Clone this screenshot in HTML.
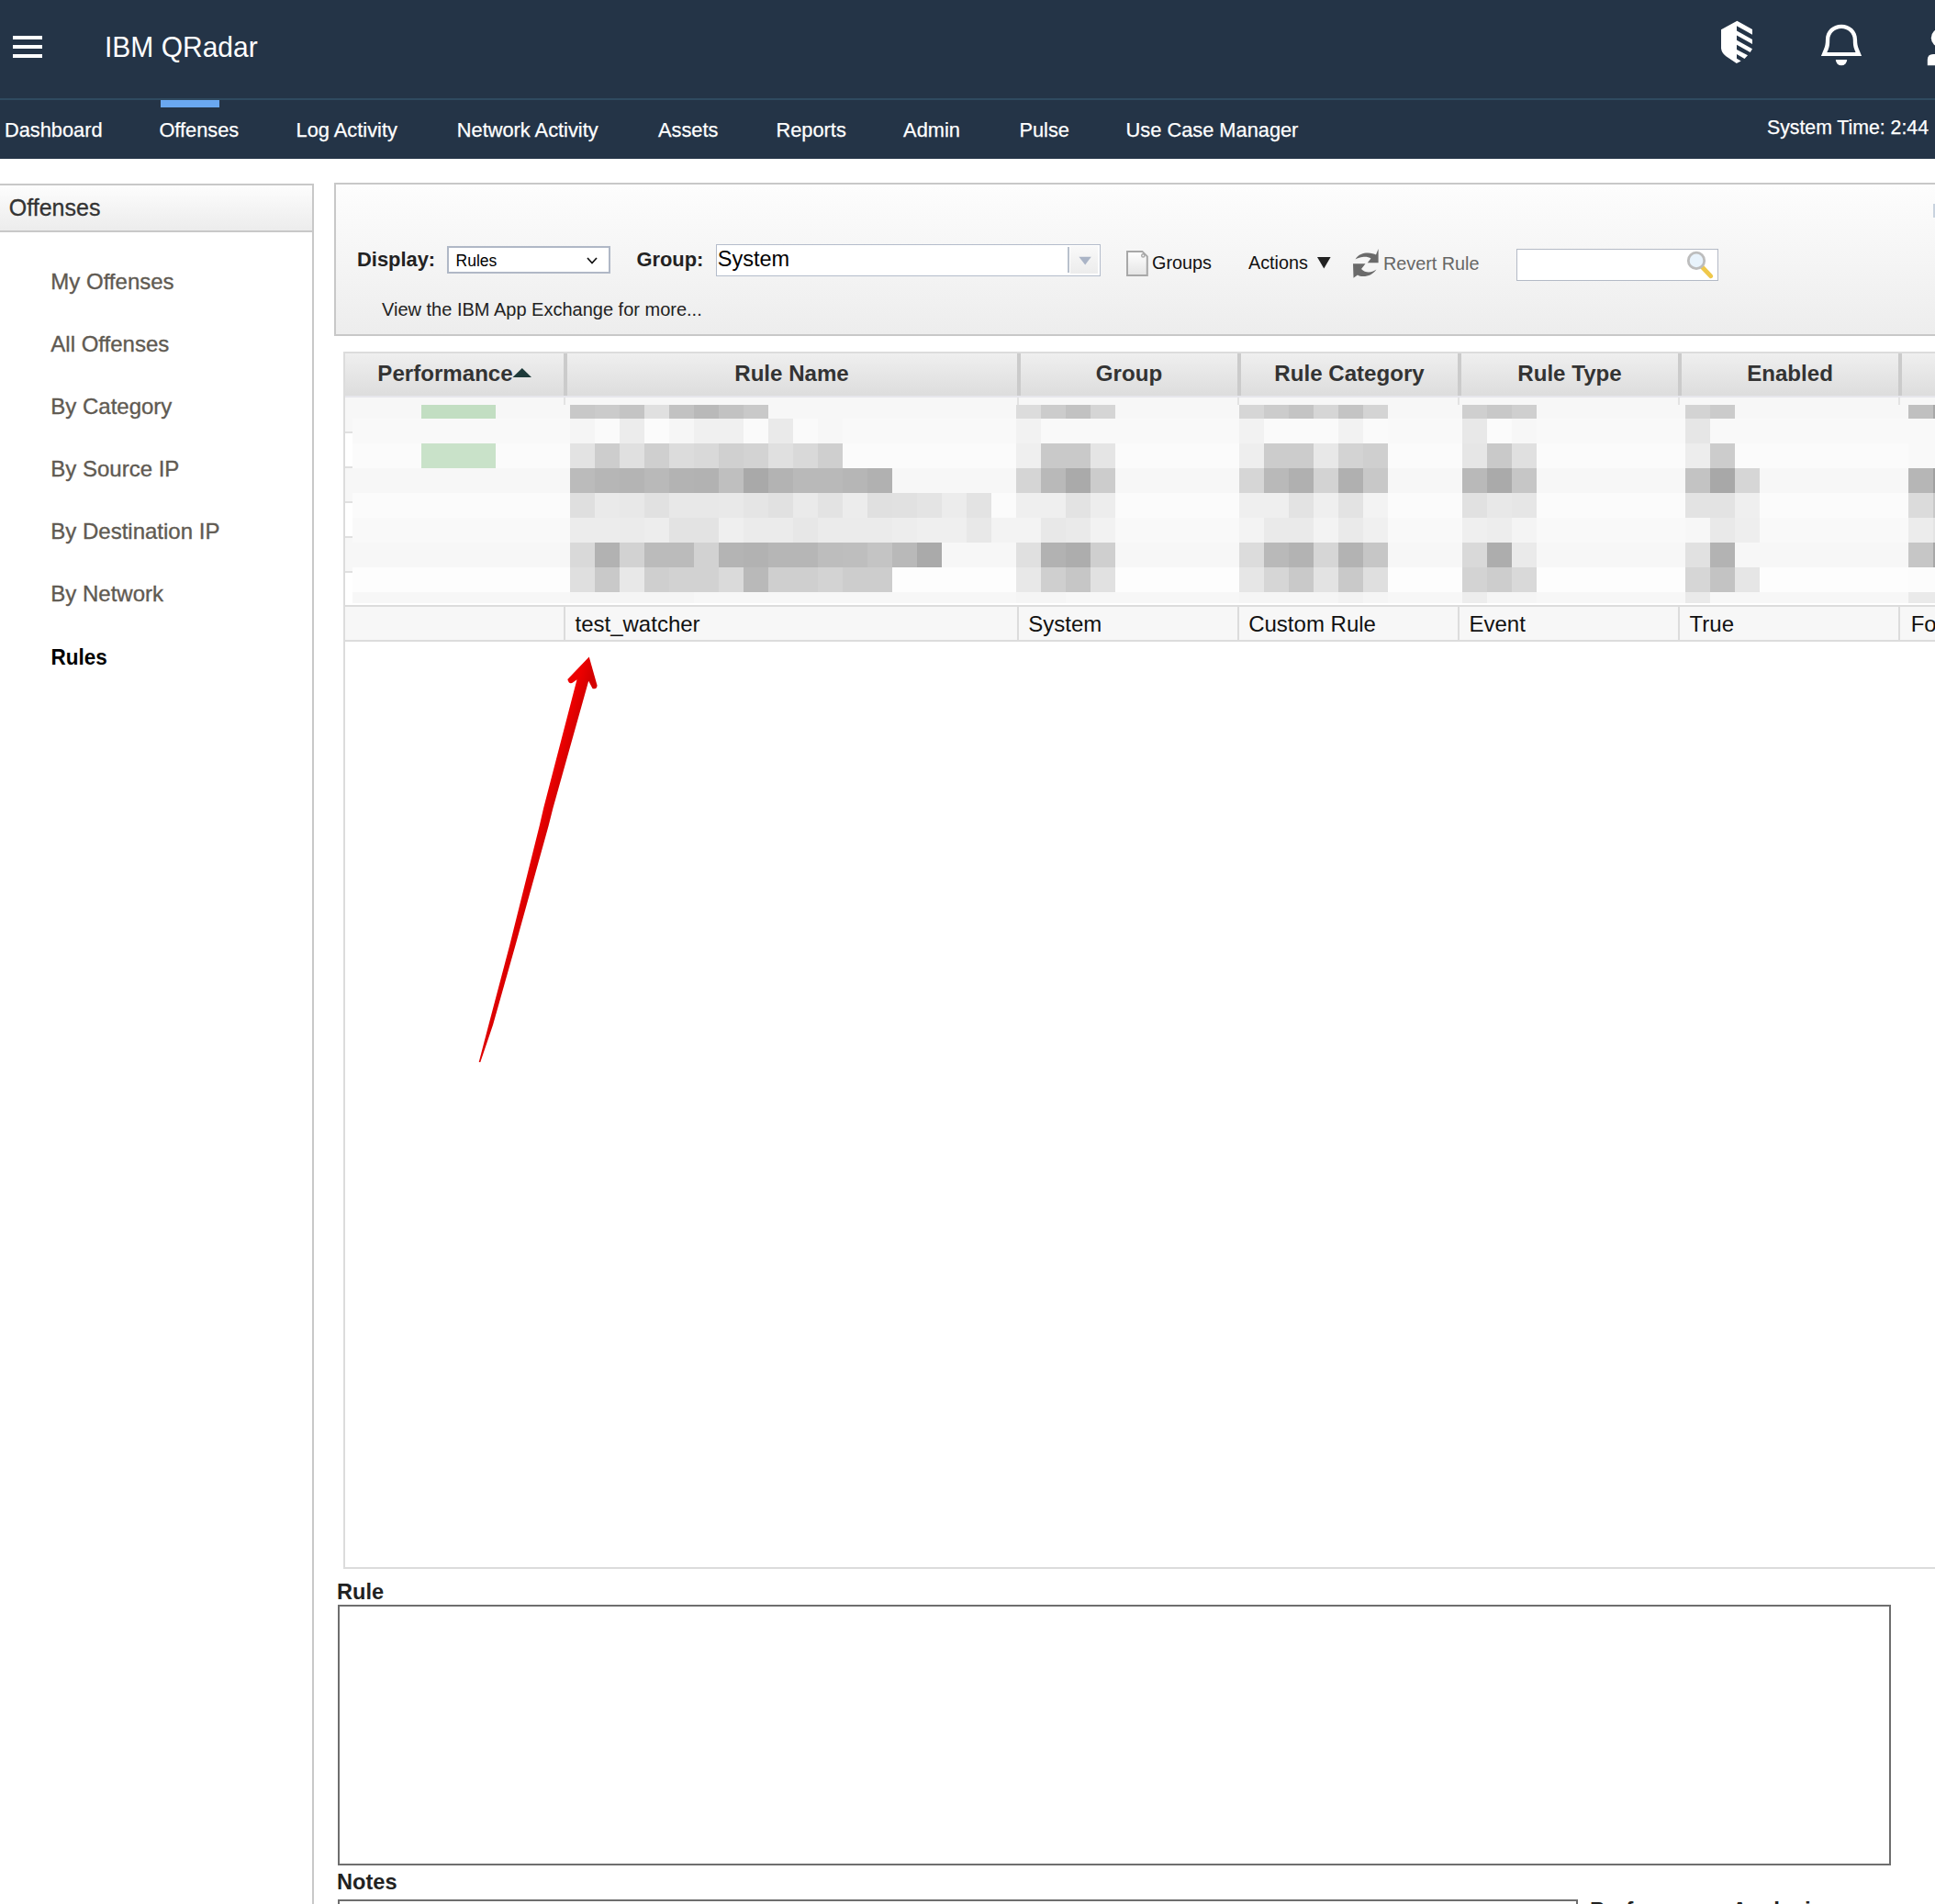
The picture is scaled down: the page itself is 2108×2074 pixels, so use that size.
<!DOCTYPE html><html><head><meta charset="utf-8"><style>
html,body{margin:0;padding:0;width:2108px;height:2074px;overflow:hidden;background:#fff;position:relative;}
.t{position:absolute;white-space:nowrap;line-height:1;font-family:"Liberation Sans", sans-serif;}
.r{position:absolute;}
svg{position:absolute;overflow:visible;}
</style></head><body>
<div class="r" style="left:0px;top:0px;width:2108px;height:107px;background:#243447;"></div>
<div class="r" style="left:0px;top:107px;width:2108px;height:2px;background:#2f4a60;"></div>
<div class="r" style="left:0px;top:109px;width:2108px;height:64px;background:#243447;"></div>
<div class="r" style="left:14px;top:39px;width:32px;height:4px;background:#fff;"></div>
<div class="r" style="left:14px;top:49px;width:32px;height:4px;background:#fff;"></div>
<div class="r" style="left:14px;top:59px;width:32px;height:4px;background:#fff;"></div>
<div class="t" style="left:114.0px;top:37.4px;font-size:30px;color:#fff;font-weight:400;transform:scaleY(1.07);transform-origin:0 84.65%;">IBM QRadar</div>
<div class="r" style="left:175px;top:109px;width:64px;height:8px;background:#6aa8f0;"></div>
<div class="t" style="left:4.9px;top:130.8px;font-size:21.8px;color:#fff;font-weight:400;-webkit-text-stroke:0.25px #fff;">Dashboard</div>
<div class="t" style="left:173.4px;top:130.8px;font-size:21.8px;color:#fff;font-weight:400;-webkit-text-stroke:0.25px #fff;">Offenses</div>
<div class="t" style="left:322.6px;top:130.8px;font-size:21.8px;color:#fff;font-weight:400;-webkit-text-stroke:0.25px #fff;">Log Activity</div>
<div class="t" style="left:497.8px;top:130.8px;font-size:21.8px;color:#fff;font-weight:400;-webkit-text-stroke:0.25px #fff;">Network Activity</div>
<div class="t" style="left:717.0px;top:130.8px;font-size:21.8px;color:#fff;font-weight:400;-webkit-text-stroke:0.25px #fff;">Assets</div>
<div class="t" style="left:845.5px;top:130.8px;font-size:21.8px;color:#fff;font-weight:400;-webkit-text-stroke:0.25px #fff;">Reports</div>
<div class="t" style="left:984.1px;top:130.8px;font-size:21.8px;color:#fff;font-weight:400;-webkit-text-stroke:0.25px #fff;">Admin</div>
<div class="t" style="left:1110.4px;top:130.8px;font-size:21.8px;color:#fff;font-weight:400;-webkit-text-stroke:0.25px #fff;">Pulse</div>
<div class="t" style="left:1226.6px;top:130.8px;font-size:21.8px;color:#fff;font-weight:400;-webkit-text-stroke:0.25px #fff;">Use Case Manager</div>
<div class="t" style="left:1925.0px;top:128.5px;font-size:21.25px;color:#fff;font-weight:400;-webkit-text-stroke:0.25px #fff;">System Time: 2:44</div>
<svg style="left:1860px;top:15px" width="70" height="65" viewBox="0 0 70 65"><path fill="#fff" d="M32.4,7.8 L49,17 L49,22.8 L32,13.2 L32,18.6 L49,28 L49,33 L32,23.5 L32,28.8 L49,38.3 L46.7,42 L32,33.8 L32,38.9 L44,45.2 L40.5,49 L32,44 L32,48.7 L36.7,51.4 L31.8,53.9 L20.3,46.3 Q15.5,43 15,37.6 L15,17.2 Z"/></svg>
<svg style="left:1970px;top:15px" width="80" height="70" viewBox="0 0 80 70"><path fill="#fff" fill-rule="evenodd" d="M13.9,46 L58.1,46 L55,38.5 C53.5,35 53.1,32 53.1,28.5 C53.1,18.5 45.5,11.8 36,11.8 C26.5,11.8 18.9,18.5 18.9,28.5 C18.9,32 18.5,35 17,38.5 Z M20.3,42.1 L51.5,42.1 L50.5,39.5 C49,36 48.8,32.5 48.8,28.5 C48.8,21 43,16 36,16 C29,16 23.2,21 23.2,28.5 C23.2,32.5 23,36 21.5,39.5 Z"/><path fill="#fff" d="M29.8,49.9 L42.2,49.9 A6.2,6.4 0 0 1 29.8,49.9 Z"/></svg>
<svg style="left:2090px;top:15px" width="40" height="70" viewBox="0 0 40 70"><circle cx="24" cy="26.2" r="10.2" fill="#fff"/><path fill="#fff" d="M9.8,56.3 L9.8,50 Q9.8,43.9 16,43.9 L40,43.9 L40,56.3 Z"/></svg>
<div class="r" style="left:0px;top:200px;width:342px;height:1874px;background:#fff;box-sizing:border-box;border-top:2px solid #c8c8c8;border-right:2px solid #c8c8c8;"></div>
<div class="r" style="left:0px;top:202px;width:340px;height:49px;background:linear-gradient(#fdfdfd,#ececec);"></div>
<div class="r" style="left:0px;top:251px;width:340px;height:2px;background:#c8c8c8;"></div>
<div class="t" style="left:9.8px;top:213.8px;font-size:25px;color:#333;font-weight:400;-webkit-text-stroke:0.3px #333;">Offenses</div>
<div class="t" style="left:55.3px;top:295.2px;font-size:24px;color:#5f5a52;font-weight:400;-webkit-text-stroke:0.35px #5f5a52;">My Offenses</div>
<div class="t" style="left:55.3px;top:363.2px;font-size:24px;color:#5f5a52;font-weight:400;-webkit-text-stroke:0.35px #5f5a52;">All Offenses</div>
<div class="t" style="left:55.3px;top:431.2px;font-size:24px;color:#5f5a52;font-weight:400;-webkit-text-stroke:0.35px #5f5a52;">By Category</div>
<div class="t" style="left:55.3px;top:499.2px;font-size:24px;color:#5f5a52;font-weight:400;-webkit-text-stroke:0.35px #5f5a52;">By Source IP</div>
<div class="t" style="left:55.3px;top:567.2px;font-size:24px;color:#5f5a52;font-weight:400;-webkit-text-stroke:0.35px #5f5a52;">By Destination IP</div>
<div class="t" style="left:55.3px;top:635.2px;font-size:24px;color:#5f5a52;font-weight:400;-webkit-text-stroke:0.35px #5f5a52;">By Network</div>
<div class="t" style="left:55.5px;top:705.6px;font-size:22.5px;color:#000;font-weight:700;transform:scaleY(1.04);transform-origin:0 84.65%;">Rules</div>
<div class="r" style="left:364px;top:199px;width:1800px;height:167px;background:linear-gradient(#fdfdfd,#ededed);box-sizing:border-box;border:2px solid #c8c8c8;"></div>
<div class="t" style="left:389.0px;top:271.5px;font-size:21.9px;color:#222;font-weight:700;">Display:</div>
<div class="r" style="left:487px;top:268px;width:178px;height:30px;background:#fff;box-sizing:border-box;border:2px solid #b0b8c6;"></div>
<div class="t" style="left:496.6px;top:275.7px;font-size:17.5px;color:#000;font-weight:400;">Rules</div>
<svg style="left:638px;top:278px" width="14" height="12" viewBox="0 0 14 12"><path d="M2,3 L7,8.5 L12,3" fill="none" stroke="#111" stroke-width="1.7"/></svg>
<div class="t" style="left:693.4px;top:271.5px;font-size:21.9px;color:#222;font-weight:700;">Group:</div>
<div class="r" style="left:779.5px;top:265.5px;width:419.5px;height:35px;background:#fff;box-sizing:border-box;border:1.6px solid #b4bccb;"></div>
<div class="r" style="left:1163px;top:269px;width:2px;height:28px;background:#b8c0cc;"></div>
<div class="r" style="left:1165px;top:267px;width:32px;height:32px;background:linear-gradient(#f9f9f9,#ececec);box-sizing:border-box;border:1px solid #fff;"></div>
<svg style="left:1170px;top:274px" width="24" height="20" viewBox="0 0 24 20"><path d="M5.4,5.7 L18.8,5.7 L12.2,14.4 Z" fill="#aab4c6"/></svg>
<div class="t" style="left:781.8px;top:271.1px;font-size:23.5px;color:#000;font-weight:400;">System</div>
<svg style="left:1220px;top:262px" width="40" height="46" viewBox="0 0 40 46"><defs><linearGradient id="dg" x1="0" y1="0" x2="0" y2="1"><stop offset="0" stop-color="#fff"/><stop offset="1" stop-color="#e4e4e4"/></linearGradient></defs><path d="M8,11.9 L24.4,11.9 L29.8,17.4 L29.8,37.9 L8,37.9 Z" fill="url(#dg)" stroke="#a8a8a8" stroke-width="2"/><circle cx="25.3" cy="16.4" r="1.6" fill="none" stroke="#a8a8a8" stroke-width="1.4"/></svg>
<div class="t" style="left:1255.0px;top:277.1px;font-size:19.8px;color:#111;font-weight:400;">Groups</div>
<div class="t" style="left:1360.0px;top:277.1px;font-size:19.8px;color:#111;font-weight:400;">Actions</div>
<svg style="left:1430px;top:278px" width="24" height="16" viewBox="0 0 24 16"><path d="M5,2 L19.6,2 L12.3,14.5 Z" fill="#222"/></svg>
<svg style="left:1465px;top:265px" width="45" height="45" viewBox="0 0 45 45"><g fill="#6a6a6a"><path d="M11.5,17.5 C15,12 20,10.5 25,10.5 C29,10.5 32,11.5 34,12.5 L36.6,6 L36.6,21.3 L24.8,21.3 L28.5,16.5 C26.5,15 23,14.5 20.5,14.8 C16.5,15.2 13,16.5 11.5,17.5 Z"/><path d="M9,22.2 L22.5,22.2 L18,28 C20,30.5 23.5,31.5 26,31.5 C29.5,31.5 32.5,30 34.5,28.5 C31,33.5 26,36 20,36 C17.5,36 15.5,35.5 14,34.5 L9.5,37.8 Z"/></g></svg>
<div class="t" style="left:1507.0px;top:277.9px;font-size:19.8px;color:#666;font-weight:400;">Revert Rule</div>
<div class="r" style="left:1652px;top:270.5px;width:220px;height:35px;background:#fff;box-sizing:border-box;border:1.6px solid #b4bac6;"></div>
<svg style="left:1830px;top:266px" width="46" height="46" viewBox="0 0 46 46"><line x1="24.5" y1="25" x2="33.8" y2="34.8" stroke="#efc84a" stroke-width="4.8" stroke-linecap="round"/><circle cx="18" cy="17.9" r="8.7" fill="#e8f3fc" stroke="#bdbdbd" stroke-width="2.8"/></svg>
<div class="t" style="left:416.0px;top:326.9px;font-size:20px;color:#222;font-weight:400;">View the IBM App Exchange for more...</div>
<div class="r" style="left:374px;top:383px;width:1800px;height:1326px;background:#fff;box-sizing:border-box;border:2px solid #dcdcdc;"></div>
<div class="r" style="left:376px;top:385px;width:1732px;height:46px;background:linear-gradient(#efefef,#dddddd);"></div>
<div class="r" style="left:376px;top:431px;width:1732px;height:2px;background:#e6e6ec;"></div>
<div class="r" style="left:614px;top:385px;width:4px;height:46px;background:#cbcbcb;"></div>
<div class="r" style="left:1108px;top:385px;width:4px;height:46px;background:#cbcbcb;"></div>
<div class="r" style="left:1348px;top:385px;width:4px;height:46px;background:#cbcbcb;"></div>
<div class="r" style="left:1588px;top:385px;width:4px;height:46px;background:#cbcbcb;"></div>
<div class="r" style="left:1828px;top:385px;width:4px;height:46px;background:#cbcbcb;"></div>
<div class="r" style="left:2068px;top:385px;width:4px;height:46px;background:#cbcbcb;"></div>
<div class="t" style="left:285px;width:400px;text-align:center;top:394.8px;font-size:24.1px;font-weight:700;color:#333">Performance</div>
<svg style="left:556px;top:399px" width="26" height="14" viewBox="0 0 26 14"><path d="M2.5,12 L12.8,2 L23,12 Z" fill="#1d3a3a"/></svg>
<div class="t" style="left:662.5px;width:400px;text-align:center;top:394.8px;font-size:24.1px;font-weight:700;color:#333">Rule Name</div>
<div class="t" style="left:1030px;width:400px;text-align:center;top:394.8px;font-size:24.1px;font-weight:700;color:#333">Group</div>
<div class="t" style="left:1270px;width:400px;text-align:center;top:394.8px;font-size:24.1px;font-weight:700;color:#333">Rule Category</div>
<div class="t" style="left:1510px;width:400px;text-align:center;top:394.8px;font-size:24.1px;font-weight:700;color:#333">Rule Type</div>
<div class="t" style="left:1750px;width:400px;text-align:center;top:394.8px;font-size:24.1px;font-weight:700;color:#333">Enabled</div>
<div class="r" style="left:384px;top:433px;width:1724px;height:23px;background:#f7f7f7;"></div>
<div class="r" style="left:384px;top:456px;width:1724px;height:27px;background:#f9f9f9;"></div>
<div class="r" style="left:384px;top:483px;width:1724px;height:27px;background:#fbfbfb;"></div>
<div class="r" style="left:384px;top:510px;width:1724px;height:27px;background:#f7f7f7;"></div>
<div class="r" style="left:384px;top:537px;width:1724px;height:27px;background:#fbfbfb;"></div>
<div class="r" style="left:384px;top:564px;width:1724px;height:27px;background:#f9f9f9;"></div>
<div class="r" style="left:384px;top:591px;width:1724px;height:27px;background:#f7f7f7;"></div>
<div class="r" style="left:384px;top:618px;width:1724px;height:27px;background:#fdfdfd;"></div>
<div class="r" style="left:384px;top:645px;width:1724px;height:12px;background:#f7f7f7;"></div>
<div class="r" style="left:376px;top:433px;width:8px;height:38px;background:#f7f7f7;"></div>
<div class="r" style="left:376px;top:471px;width:8px;height:38px;background:#fff;"></div>
<div class="r" style="left:376px;top:509px;width:8px;height:38px;background:#f7f7f7;"></div>
<div class="r" style="left:376px;top:547px;width:8px;height:38px;background:#fff;"></div>
<div class="r" style="left:376px;top:585px;width:8px;height:38px;background:#f7f7f7;"></div>
<div class="r" style="left:376px;top:623px;width:8px;height:36px;background:#fff;"></div>
<div class="r" style="left:376px;top:470px;width:8px;height:2px;background:#e0e0e0;"></div>
<div class="r" style="left:376px;top:508px;width:8px;height:2px;background:#e0e0e0;"></div>
<div class="r" style="left:376px;top:546px;width:8px;height:2px;background:#e0e0e0;"></div>
<div class="r" style="left:376px;top:584px;width:8px;height:2px;background:#e0e0e0;"></div>
<div class="r" style="left:376px;top:622px;width:8px;height:2px;background:#e0e0e0;"></div>
<div class="r" style="left:614px;top:433px;width:2px;height:8px;background:#e3e3e3;"></div>
<div class="r" style="left:1108px;top:433px;width:2px;height:8px;background:#e3e3e3;"></div>
<div class="r" style="left:1348px;top:433px;width:2px;height:8px;background:#e3e3e3;"></div>
<div class="r" style="left:1588px;top:433px;width:2px;height:8px;background:#e3e3e3;"></div>
<div class="r" style="left:1828px;top:433px;width:2px;height:8px;background:#e3e3e3;"></div>
<div class="r" style="left:2068px;top:433px;width:2px;height:8px;background:#e3e3e3;"></div>
<div class="r" style="left:459px;top:441px;width:81px;height:15px;background:#c2dec2;"></div>
<div class="r" style="left:459px;top:483px;width:81px;height:27px;background:#c9e2c9;"></div>
<div class="r" style="left:621px;top:441px;width:27px;height:15px;background:#c8c8c8;"></div>
<div class="r" style="left:648px;top:441px;width:27px;height:15px;background:#cbcbcb;"></div>
<div class="r" style="left:675px;top:441px;width:27px;height:15px;background:#c4c4c4;"></div>
<div class="r" style="left:702px;top:441px;width:27px;height:15px;background:#e0e0e0;"></div>
<div class="r" style="left:729px;top:441px;width:27px;height:15px;background:#c2c2c2;"></div>
<div class="r" style="left:756px;top:441px;width:27px;height:15px;background:#b9b9b9;"></div>
<div class="r" style="left:783px;top:441px;width:27px;height:15px;background:#c2c2c2;"></div>
<div class="r" style="left:810px;top:441px;width:27px;height:15px;background:#c9c9c9;"></div>
<div class="r" style="left:621px;top:456px;width:27px;height:27px;background:#f5f5f5;"></div>
<div class="r" style="left:648px;top:456px;width:27px;height:27px;background:#fafafa;"></div>
<div class="r" style="left:675px;top:456px;width:27px;height:27px;background:#ececec;"></div>
<div class="r" style="left:702px;top:456px;width:27px;height:27px;background:#fbfbfb;"></div>
<div class="r" style="left:729px;top:456px;width:27px;height:27px;background:#f6f6f6;"></div>
<div class="r" style="left:756px;top:456px;width:27px;height:27px;background:#f0f0f0;"></div>
<div class="r" style="left:783px;top:456px;width:27px;height:27px;background:#f0f0f0;"></div>
<div class="r" style="left:810px;top:456px;width:27px;height:27px;background:#fafafa;"></div>
<div class="r" style="left:837px;top:456px;width:27px;height:27px;background:#eaeaea;"></div>
<div class="r" style="left:864px;top:456px;width:27px;height:27px;background:#fafafa;"></div>
<div class="r" style="left:891px;top:456px;width:27px;height:27px;background:#f7f7f7;"></div>
<div class="r" style="left:621px;top:483px;width:27px;height:27px;background:#e3e3e3;"></div>
<div class="r" style="left:648px;top:483px;width:27px;height:27px;background:#cdcdcd;"></div>
<div class="r" style="left:675px;top:483px;width:27px;height:27px;background:#e0e0e0;"></div>
<div class="r" style="left:702px;top:483px;width:27px;height:27px;background:#cfcfcf;"></div>
<div class="r" style="left:729px;top:483px;width:27px;height:27px;background:#dcdcdc;"></div>
<div class="r" style="left:756px;top:483px;width:27px;height:27px;background:#d9d9d9;"></div>
<div class="r" style="left:783px;top:483px;width:27px;height:27px;background:#d0d0d0;"></div>
<div class="r" style="left:810px;top:483px;width:27px;height:27px;background:#d3d3d3;"></div>
<div class="r" style="left:837px;top:483px;width:27px;height:27px;background:#e0e0e0;"></div>
<div class="r" style="left:864px;top:483px;width:27px;height:27px;background:#d9d9d9;"></div>
<div class="r" style="left:891px;top:483px;width:27px;height:27px;background:#cfcfcf;"></div>
<div class="r" style="left:621px;top:510px;width:27px;height:27px;background:#bbbbbb;"></div>
<div class="r" style="left:648px;top:510px;width:27px;height:27px;background:#b6b6b6;"></div>
<div class="r" style="left:675px;top:510px;width:27px;height:27px;background:#b4b4b4;"></div>
<div class="r" style="left:702px;top:510px;width:27px;height:27px;background:#b9b9b9;"></div>
<div class="r" style="left:729px;top:510px;width:27px;height:27px;background:#b3b3b3;"></div>
<div class="r" style="left:756px;top:510px;width:27px;height:27px;background:#b2b2b2;"></div>
<div class="r" style="left:783px;top:510px;width:27px;height:27px;background:#bfbfbf;"></div>
<div class="r" style="left:810px;top:510px;width:27px;height:27px;background:#a9a9a9;"></div>
<div class="r" style="left:837px;top:510px;width:27px;height:27px;background:#b3b3b3;"></div>
<div class="r" style="left:864px;top:510px;width:27px;height:27px;background:#b9b9b9;"></div>
<div class="r" style="left:891px;top:510px;width:27px;height:27px;background:#b9b9b9;"></div>
<div class="r" style="left:918px;top:510px;width:27px;height:27px;background:#b6b6b6;"></div>
<div class="r" style="left:945px;top:510px;width:27px;height:27px;background:#b1b1b1;"></div>
<div class="r" style="left:621px;top:537px;width:27px;height:27px;background:#dfdfdf;"></div>
<div class="r" style="left:648px;top:537px;width:27px;height:27px;background:#eaeaea;"></div>
<div class="r" style="left:675px;top:537px;width:27px;height:27px;background:#e8e8e8;"></div>
<div class="r" style="left:702px;top:537px;width:27px;height:27px;background:#e1e1e1;"></div>
<div class="r" style="left:729px;top:537px;width:27px;height:27px;background:#e8e8e8;"></div>
<div class="r" style="left:756px;top:537px;width:27px;height:27px;background:#e8e8e8;"></div>
<div class="r" style="left:783px;top:537px;width:27px;height:27px;background:#e9e9e9;"></div>
<div class="r" style="left:810px;top:537px;width:27px;height:27px;background:#e5e5e5;"></div>
<div class="r" style="left:837px;top:537px;width:27px;height:27px;background:#e1e1e1;"></div>
<div class="r" style="left:864px;top:537px;width:27px;height:27px;background:#eaeaea;"></div>
<div class="r" style="left:891px;top:537px;width:27px;height:27px;background:#e3e3e3;"></div>
<div class="r" style="left:918px;top:537px;width:27px;height:27px;background:#ececec;"></div>
<div class="r" style="left:945px;top:537px;width:27px;height:27px;background:#e0e0e0;"></div>
<div class="r" style="left:972px;top:537px;width:27px;height:27px;background:#e1e1e1;"></div>
<div class="r" style="left:999px;top:537px;width:27px;height:27px;background:#e4e4e4;"></div>
<div class="r" style="left:1026px;top:537px;width:27px;height:27px;background:#ececec;"></div>
<div class="r" style="left:1053px;top:537px;width:27px;height:27px;background:#e3e3e3;"></div>
<div class="r" style="left:621px;top:564px;width:27px;height:27px;background:#ececec;"></div>
<div class="r" style="left:648px;top:564px;width:27px;height:27px;background:#ececec;"></div>
<div class="r" style="left:675px;top:564px;width:27px;height:27px;background:#ebebeb;"></div>
<div class="r" style="left:702px;top:564px;width:27px;height:27px;background:#ededed;"></div>
<div class="r" style="left:729px;top:564px;width:27px;height:27px;background:#e3e3e3;"></div>
<div class="r" style="left:756px;top:564px;width:27px;height:27px;background:#e3e3e3;"></div>
<div class="r" style="left:783px;top:564px;width:27px;height:27px;background:#efefef;"></div>
<div class="r" style="left:810px;top:564px;width:27px;height:27px;background:#ebebeb;"></div>
<div class="r" style="left:837px;top:564px;width:27px;height:27px;background:#ebebeb;"></div>
<div class="r" style="left:864px;top:564px;width:27px;height:27px;background:#e7e7e7;"></div>
<div class="r" style="left:891px;top:564px;width:27px;height:27px;background:#ebebeb;"></div>
<div class="r" style="left:918px;top:564px;width:27px;height:27px;background:#ebebeb;"></div>
<div class="r" style="left:945px;top:564px;width:27px;height:27px;background:#ebebeb;"></div>
<div class="r" style="left:972px;top:564px;width:27px;height:27px;background:#ededed;"></div>
<div class="r" style="left:999px;top:564px;width:27px;height:27px;background:#efefef;"></div>
<div class="r" style="left:1026px;top:564px;width:27px;height:27px;background:#efefef;"></div>
<div class="r" style="left:1053px;top:564px;width:27px;height:27px;background:#e8e8e8;"></div>
<div class="r" style="left:1080px;top:564px;width:27px;height:27px;background:#f3f3f3;"></div>
<div class="r" style="left:621px;top:591px;width:27px;height:27px;background:#d9d9d9;"></div>
<div class="r" style="left:648px;top:591px;width:27px;height:27px;background:#b2b2b2;"></div>
<div class="r" style="left:675px;top:591px;width:27px;height:27px;background:#d2d2d2;"></div>
<div class="r" style="left:702px;top:591px;width:27px;height:27px;background:#bbbbbb;"></div>
<div class="r" style="left:729px;top:591px;width:27px;height:27px;background:#bbbbbb;"></div>
<div class="r" style="left:756px;top:591px;width:27px;height:27px;background:#d2d2d2;"></div>
<div class="r" style="left:783px;top:591px;width:27px;height:27px;background:#b4b4b4;"></div>
<div class="r" style="left:810px;top:591px;width:27px;height:27px;background:#b2b2b2;"></div>
<div class="r" style="left:837px;top:591px;width:27px;height:27px;background:#b6b6b6;"></div>
<div class="r" style="left:864px;top:591px;width:27px;height:27px;background:#b6b6b6;"></div>
<div class="r" style="left:891px;top:591px;width:27px;height:27px;background:#bdbdbd;"></div>
<div class="r" style="left:918px;top:591px;width:27px;height:27px;background:#bebebe;"></div>
<div class="r" style="left:945px;top:591px;width:27px;height:27px;background:#c4c4c4;"></div>
<div class="r" style="left:972px;top:591px;width:27px;height:27px;background:#b9b9b9;"></div>
<div class="r" style="left:999px;top:591px;width:27px;height:27px;background:#aaaaaa;"></div>
<div class="r" style="left:621px;top:618px;width:27px;height:27px;background:#dfdfdf;"></div>
<div class="r" style="left:648px;top:618px;width:27px;height:27px;background:#c9c9c9;"></div>
<div class="r" style="left:675px;top:618px;width:27px;height:27px;background:#e8e8e8;"></div>
<div class="r" style="left:702px;top:618px;width:27px;height:27px;background:#cfcfcf;"></div>
<div class="r" style="left:729px;top:618px;width:27px;height:27px;background:#d2d2d2;"></div>
<div class="r" style="left:756px;top:618px;width:27px;height:27px;background:#d2d2d2;"></div>
<div class="r" style="left:783px;top:618px;width:27px;height:27px;background:#dadada;"></div>
<div class="r" style="left:810px;top:618px;width:27px;height:27px;background:#b9b9b9;"></div>
<div class="r" style="left:837px;top:618px;width:27px;height:27px;background:#cfcfcf;"></div>
<div class="r" style="left:864px;top:618px;width:27px;height:27px;background:#cfcfcf;"></div>
<div class="r" style="left:891px;top:618px;width:27px;height:27px;background:#d3d3d3;"></div>
<div class="r" style="left:918px;top:618px;width:27px;height:27px;background:#cdcdcd;"></div>
<div class="r" style="left:945px;top:618px;width:27px;height:27px;background:#cdcdcd;"></div>
<div class="r" style="left:621px;top:645px;width:27px;height:12px;background:#f5f5f5;"></div>
<div class="r" style="left:648px;top:645px;width:27px;height:12px;background:#f5f5f5;"></div>
<div class="r" style="left:675px;top:645px;width:27px;height:12px;background:#f5f5f5;"></div>
<div class="r" style="left:702px;top:645px;width:27px;height:12px;background:#f5f5f5;"></div>
<div class="r" style="left:729px;top:645px;width:27px;height:12px;background:#f5f5f5;"></div>
<div class="r" style="left:756px;top:645px;width:27px;height:12px;background:#f7f7f7;"></div>
<div class="r" style="left:1107px;top:441px;width:27px;height:15px;background:#dcdcdc;"></div>
<div class="r" style="left:1134px;top:441px;width:27px;height:15px;background:#cccccc;"></div>
<div class="r" style="left:1161px;top:441px;width:27px;height:15px;background:#c2c2c2;"></div>
<div class="r" style="left:1188px;top:441px;width:27px;height:15px;background:#d5d5d5;"></div>
<div class="r" style="left:1107px;top:456px;width:27px;height:27px;background:#f2f2f2;"></div>
<div class="r" style="left:1134px;top:456px;width:27px;height:27px;background:#f9f9f9;"></div>
<div class="r" style="left:1161px;top:456px;width:27px;height:27px;background:#f9f9f9;"></div>
<div class="r" style="left:1188px;top:456px;width:27px;height:27px;background:#f9f9f9;"></div>
<div class="r" style="left:1107px;top:483px;width:27px;height:27px;background:#efefef;"></div>
<div class="r" style="left:1134px;top:483px;width:27px;height:27px;background:#c9c9c9;"></div>
<div class="r" style="left:1161px;top:483px;width:27px;height:27px;background:#c9c9c9;"></div>
<div class="r" style="left:1188px;top:483px;width:27px;height:27px;background:#e5e5e5;"></div>
<div class="r" style="left:1107px;top:510px;width:27px;height:27px;background:#d5d5d5;"></div>
<div class="r" style="left:1134px;top:510px;width:27px;height:27px;background:#b9b9b9;"></div>
<div class="r" style="left:1161px;top:510px;width:27px;height:27px;background:#aaaaaa;"></div>
<div class="r" style="left:1188px;top:510px;width:27px;height:27px;background:#cccccc;"></div>
<div class="r" style="left:1107px;top:537px;width:27px;height:27px;background:#efefef;"></div>
<div class="r" style="left:1134px;top:537px;width:27px;height:27px;background:#efefef;"></div>
<div class="r" style="left:1161px;top:537px;width:27px;height:27px;background:#e3e3e3;"></div>
<div class="r" style="left:1188px;top:537px;width:27px;height:27px;background:#ededed;"></div>
<div class="r" style="left:1107px;top:564px;width:27px;height:27px;background:#f3f3f3;"></div>
<div class="r" style="left:1134px;top:564px;width:27px;height:27px;background:#e8e8e8;"></div>
<div class="r" style="left:1161px;top:564px;width:27px;height:27px;background:#eaeaea;"></div>
<div class="r" style="left:1188px;top:564px;width:27px;height:27px;background:#f2f2f2;"></div>
<div class="r" style="left:1107px;top:591px;width:27px;height:27px;background:#e0e0e0;"></div>
<div class="r" style="left:1134px;top:591px;width:27px;height:27px;background:#b2b2b2;"></div>
<div class="r" style="left:1161px;top:591px;width:27px;height:27px;background:#adadad;"></div>
<div class="r" style="left:1188px;top:591px;width:27px;height:27px;background:#cfcfcf;"></div>
<div class="r" style="left:1107px;top:618px;width:27px;height:27px;background:#e8e8e8;"></div>
<div class="r" style="left:1134px;top:618px;width:27px;height:27px;background:#cfcfcf;"></div>
<div class="r" style="left:1161px;top:618px;width:27px;height:27px;background:#c6c6c6;"></div>
<div class="r" style="left:1188px;top:618px;width:27px;height:27px;background:#e1e1e1;"></div>
<div class="r" style="left:1107px;top:645px;width:27px;height:12px;background:#f5f5f5;"></div>
<div class="r" style="left:1134px;top:645px;width:27px;height:12px;background:#f5f5f5;"></div>
<div class="r" style="left:1161px;top:645px;width:27px;height:12px;background:#f7f7f7;"></div>
<div class="r" style="left:1188px;top:645px;width:27px;height:12px;background:#f7f7f7;"></div>
<div class="r" style="left:1350px;top:441px;width:27px;height:15px;background:#d6d6d6;"></div>
<div class="r" style="left:1377px;top:441px;width:27px;height:15px;background:#cccccc;"></div>
<div class="r" style="left:1404px;top:441px;width:27px;height:15px;background:#c4c4c4;"></div>
<div class="r" style="left:1431px;top:441px;width:27px;height:15px;background:#d6d6d6;"></div>
<div class="r" style="left:1458px;top:441px;width:27px;height:15px;background:#c4c4c4;"></div>
<div class="r" style="left:1485px;top:441px;width:27px;height:15px;background:#d4d4d4;"></div>
<div class="r" style="left:1350px;top:456px;width:27px;height:27px;background:#f2f2f2;"></div>
<div class="r" style="left:1377px;top:456px;width:27px;height:27px;background:#fafafa;"></div>
<div class="r" style="left:1404px;top:456px;width:27px;height:27px;background:#fafafa;"></div>
<div class="r" style="left:1431px;top:456px;width:27px;height:27px;background:#fafafa;"></div>
<div class="r" style="left:1458px;top:456px;width:27px;height:27px;background:#f2f2f2;"></div>
<div class="r" style="left:1485px;top:456px;width:27px;height:27px;background:#fafafa;"></div>
<div class="r" style="left:1350px;top:483px;width:27px;height:27px;background:#eeeeee;"></div>
<div class="r" style="left:1377px;top:483px;width:27px;height:27px;background:#cccccc;"></div>
<div class="r" style="left:1404px;top:483px;width:27px;height:27px;background:#cccccc;"></div>
<div class="r" style="left:1431px;top:483px;width:27px;height:27px;background:#e8e8e8;"></div>
<div class="r" style="left:1458px;top:483px;width:27px;height:27px;background:#d3d3d3;"></div>
<div class="r" style="left:1485px;top:483px;width:27px;height:27px;background:#cfcfcf;"></div>
<div class="r" style="left:1350px;top:510px;width:27px;height:27px;background:#d6d6d6;"></div>
<div class="r" style="left:1377px;top:510px;width:27px;height:27px;background:#b9b9b9;"></div>
<div class="r" style="left:1404px;top:510px;width:27px;height:27px;background:#b0b0b0;"></div>
<div class="r" style="left:1431px;top:510px;width:27px;height:27px;background:#d3d3d3;"></div>
<div class="r" style="left:1458px;top:510px;width:27px;height:27px;background:#b0b0b0;"></div>
<div class="r" style="left:1485px;top:510px;width:27px;height:27px;background:#c8c8c8;"></div>
<div class="r" style="left:1350px;top:537px;width:27px;height:27px;background:#efefef;"></div>
<div class="r" style="left:1377px;top:537px;width:27px;height:27px;background:#efefef;"></div>
<div class="r" style="left:1404px;top:537px;width:27px;height:27px;background:#e3e3e3;"></div>
<div class="r" style="left:1431px;top:537px;width:27px;height:27px;background:#efefef;"></div>
<div class="r" style="left:1458px;top:537px;width:27px;height:27px;background:#e3e3e3;"></div>
<div class="r" style="left:1485px;top:537px;width:27px;height:27px;background:#f3f3f3;"></div>
<div class="r" style="left:1350px;top:564px;width:27px;height:27px;background:#f3f3f3;"></div>
<div class="r" style="left:1377px;top:564px;width:27px;height:27px;background:#eaeaea;"></div>
<div class="r" style="left:1404px;top:564px;width:27px;height:27px;background:#eaeaea;"></div>
<div class="r" style="left:1431px;top:564px;width:27px;height:27px;background:#f3f3f3;"></div>
<div class="r" style="left:1458px;top:564px;width:27px;height:27px;background:#eaeaea;"></div>
<div class="r" style="left:1485px;top:564px;width:27px;height:27px;background:#f0f0f0;"></div>
<div class="r" style="left:1350px;top:591px;width:27px;height:27px;background:#dcdcdc;"></div>
<div class="r" style="left:1377px;top:591px;width:27px;height:27px;background:#b9b9b9;"></div>
<div class="r" style="left:1404px;top:591px;width:27px;height:27px;background:#b3b3b3;"></div>
<div class="r" style="left:1431px;top:591px;width:27px;height:27px;background:#d6d6d6;"></div>
<div class="r" style="left:1458px;top:591px;width:27px;height:27px;background:#b3b3b3;"></div>
<div class="r" style="left:1485px;top:591px;width:27px;height:27px;background:#c6c6c6;"></div>
<div class="r" style="left:1350px;top:618px;width:27px;height:27px;background:#e6e6e6;"></div>
<div class="r" style="left:1377px;top:618px;width:27px;height:27px;background:#d6d6d6;"></div>
<div class="r" style="left:1404px;top:618px;width:27px;height:27px;background:#c9c9c9;"></div>
<div class="r" style="left:1431px;top:618px;width:27px;height:27px;background:#e3e3e3;"></div>
<div class="r" style="left:1458px;top:618px;width:27px;height:27px;background:#c9c9c9;"></div>
<div class="r" style="left:1485px;top:618px;width:27px;height:27px;background:#dfdfdf;"></div>
<div class="r" style="left:1350px;top:645px;width:27px;height:12px;background:#f5f5f5;"></div>
<div class="r" style="left:1377px;top:645px;width:27px;height:12px;background:#f5f5f5;"></div>
<div class="r" style="left:1404px;top:645px;width:27px;height:12px;background:#f5f5f5;"></div>
<div class="r" style="left:1431px;top:645px;width:27px;height:12px;background:#f5f5f5;"></div>
<div class="r" style="left:1458px;top:645px;width:27px;height:12px;background:#f2f2f2;"></div>
<div class="r" style="left:1485px;top:645px;width:27px;height:12px;background:#f5f5f5;"></div>
<div class="r" style="left:1593px;top:441px;width:27px;height:15px;background:#cfcfcf;"></div>
<div class="r" style="left:1620px;top:441px;width:27px;height:15px;background:#c8c8c8;"></div>
<div class="r" style="left:1647px;top:441px;width:27px;height:15px;background:#cfcfcf;"></div>
<div class="r" style="left:1593px;top:456px;width:27px;height:27px;background:#e8e8e8;"></div>
<div class="r" style="left:1620px;top:456px;width:27px;height:27px;background:#fbfbfb;"></div>
<div class="r" style="left:1647px;top:456px;width:27px;height:27px;background:#f7f7f7;"></div>
<div class="r" style="left:1593px;top:483px;width:27px;height:27px;background:#e6e6e6;"></div>
<div class="r" style="left:1620px;top:483px;width:27px;height:27px;background:#c9c9c9;"></div>
<div class="r" style="left:1647px;top:483px;width:27px;height:27px;background:#e0e0e0;"></div>
<div class="r" style="left:1593px;top:510px;width:27px;height:27px;background:#b9b9b9;"></div>
<div class="r" style="left:1620px;top:510px;width:27px;height:27px;background:#aaaaaa;"></div>
<div class="r" style="left:1647px;top:510px;width:27px;height:27px;background:#c6c6c6;"></div>
<div class="r" style="left:1593px;top:537px;width:27px;height:27px;background:#e1e1e1;"></div>
<div class="r" style="left:1620px;top:537px;width:27px;height:27px;background:#e8e8e8;"></div>
<div class="r" style="left:1647px;top:537px;width:27px;height:27px;background:#e6e6e6;"></div>
<div class="r" style="left:1593px;top:564px;width:27px;height:27px;background:#efefef;"></div>
<div class="r" style="left:1620px;top:564px;width:27px;height:27px;background:#ededed;"></div>
<div class="r" style="left:1647px;top:564px;width:27px;height:27px;background:#f4f4f4;"></div>
<div class="r" style="left:1593px;top:591px;width:27px;height:27px;background:#d9d9d9;"></div>
<div class="r" style="left:1620px;top:591px;width:27px;height:27px;background:#adadad;"></div>
<div class="r" style="left:1647px;top:591px;width:27px;height:27px;background:#eaeaea;"></div>
<div class="r" style="left:1593px;top:618px;width:27px;height:27px;background:#d3d3d3;"></div>
<div class="r" style="left:1620px;top:618px;width:27px;height:27px;background:#cdcdcd;"></div>
<div class="r" style="left:1647px;top:618px;width:27px;height:27px;background:#d9d9d9;"></div>
<div class="r" style="left:1593px;top:645px;width:27px;height:12px;background:#ededed;"></div>
<div class="r" style="left:1620px;top:645px;width:27px;height:12px;background:#f5f5f5;"></div>
<div class="r" style="left:1647px;top:645px;width:27px;height:12px;background:#f5f5f5;"></div>
<div class="r" style="left:1836px;top:441px;width:27px;height:15px;background:#d3d3d3;"></div>
<div class="r" style="left:1863px;top:441px;width:27px;height:15px;background:#cbcbcb;"></div>
<div class="r" style="left:1836px;top:456px;width:27px;height:27px;background:#e6e6e6;"></div>
<div class="r" style="left:1836px;top:483px;width:27px;height:27px;background:#ededed;"></div>
<div class="r" style="left:1863px;top:483px;width:27px;height:27px;background:#cccccc;"></div>
<div class="r" style="left:1836px;top:510px;width:27px;height:27px;background:#c3c3c3;"></div>
<div class="r" style="left:1863px;top:510px;width:27px;height:27px;background:#a8a8a8;"></div>
<div class="r" style="left:1890px;top:510px;width:27px;height:27px;background:#d6d6d6;"></div>
<div class="r" style="left:1836px;top:537px;width:27px;height:27px;background:#e3e3e3;"></div>
<div class="r" style="left:1863px;top:537px;width:27px;height:27px;background:#e3e3e3;"></div>
<div class="r" style="left:1890px;top:537px;width:27px;height:27px;background:#efefef;"></div>
<div class="r" style="left:1836px;top:564px;width:27px;height:27px;background:#f7f7f7;"></div>
<div class="r" style="left:1863px;top:564px;width:27px;height:27px;background:#e9e9e9;"></div>
<div class="r" style="left:1890px;top:564px;width:27px;height:27px;background:#eeeeee;"></div>
<div class="r" style="left:1836px;top:591px;width:27px;height:27px;background:#e1e1e1;"></div>
<div class="r" style="left:1863px;top:591px;width:27px;height:27px;background:#b3b3b3;"></div>
<div class="r" style="left:1836px;top:618px;width:27px;height:27px;background:#d6d6d6;"></div>
<div class="r" style="left:1863px;top:618px;width:27px;height:27px;background:#c3c3c3;"></div>
<div class="r" style="left:1890px;top:618px;width:27px;height:27px;background:#e6e6e6;"></div>
<div class="r" style="left:1836px;top:645px;width:27px;height:12px;background:#eaeaea;"></div>
<div class="r" style="left:2079px;top:441px;width:27px;height:15px;background:#c0c0c0;"></div>
<div class="r" style="left:2106px;top:441px;width:27px;height:15px;background:#a8a8a8;"></div>
<div class="r" style="left:2079px;top:456px;width:27px;height:27px;background:#f9f9f9;"></div>
<div class="r" style="left:2106px;top:456px;width:27px;height:27px;background:#f9f9f9;"></div>
<div class="r" style="left:2079px;top:483px;width:27px;height:27px;background:#f9f9f9;"></div>
<div class="r" style="left:2106px;top:483px;width:27px;height:27px;background:#f9f9f9;"></div>
<div class="r" style="left:2079px;top:510px;width:27px;height:27px;background:#b6b6b6;"></div>
<div class="r" style="left:2106px;top:510px;width:27px;height:27px;background:#a0a0a0;"></div>
<div class="r" style="left:2079px;top:537px;width:27px;height:27px;background:#dbdbdb;"></div>
<div class="r" style="left:2106px;top:537px;width:27px;height:27px;background:#c8c8c8;"></div>
<div class="r" style="left:2079px;top:564px;width:27px;height:27px;background:#ececec;"></div>
<div class="r" style="left:2106px;top:564px;width:27px;height:27px;background:#e4e4e4;"></div>
<div class="r" style="left:2079px;top:591px;width:27px;height:27px;background:#c6c6c6;"></div>
<div class="r" style="left:2106px;top:591px;width:27px;height:27px;background:#a8a8a8;"></div>
<div class="r" style="left:2079px;top:618px;width:27px;height:27px;background:#fcfcfc;"></div>
<div class="r" style="left:2106px;top:618px;width:27px;height:27px;background:#fcfcfc;"></div>
<div class="r" style="left:2079px;top:645px;width:27px;height:12px;background:#eaeaea;"></div>
<div class="r" style="left:2106px;top:645px;width:27px;height:12px;background:#eaeaea;"></div>
<div class="r" style="left:376px;top:659px;width:1732px;height:2px;background:#dcdcdc;"></div>
<div class="r" style="left:376px;top:661px;width:1732px;height:36px;background:#f7f7f7;"></div>
<div class="r" style="left:376px;top:697px;width:1732px;height:2px;background:#dcdcdc;"></div>
<div class="r" style="left:614px;top:661px;width:2px;height:36px;background:#dcdcdc;"></div>
<div class="r" style="left:1108px;top:661px;width:2px;height:36px;background:#dcdcdc;"></div>
<div class="r" style="left:1348px;top:661px;width:2px;height:36px;background:#dcdcdc;"></div>
<div class="r" style="left:1588px;top:661px;width:2px;height:36px;background:#dcdcdc;"></div>
<div class="r" style="left:1828px;top:661px;width:2px;height:36px;background:#dcdcdc;"></div>
<div class="r" style="left:2068px;top:661px;width:2px;height:36px;background:#dcdcdc;"></div>
<div class="t" style="left:626.5px;top:667.6px;font-size:24px;color:#111;font-weight:400;">test_watcher</div>
<div class="t" style="left:1120.3px;top:667.6px;font-size:24px;color:#111;font-weight:400;">System</div>
<div class="t" style="left:1360.2px;top:667.6px;font-size:24px;color:#111;font-weight:400;">Custom Rule</div>
<div class="t" style="left:1600.5px;top:667.6px;font-size:24px;color:#111;font-weight:400;">Event</div>
<div class="t" style="left:1840.6px;top:667.6px;font-size:24px;color:#111;font-weight:400;">True</div>
<div class="t" style="left:2081.7px;top:667.6px;font-size:24px;color:#111;font-weight:400;">Fo</div>
<svg style="left:0;top:0" width="2108" height="2074" viewBox="0 0 2108 2074"><defs><linearGradient id="ag" gradientUnits="userSpaceOnUse" x1="586.8" y1="898.4" x2="598.4" y2="901.6"><stop offset="0" stop-color="#ec0000"/><stop offset="1" stop-color="#d40000"/></linearGradient></defs><path fill="url(#ag)" d="M641.75,715.4 L650.6,746.8 Q650,751.5 645.5,750 L641.2,741.8 L602.5,880 L597.6,899.6 L561.5,1029.7 L537,1116.4 L523.3,1157 L521.7,1157 L532.3,1116.4 L555.2,1029.7 L587.7,899.6 L592.2,880 L628.5,740.2 L624.7,743 Q620,746.5 618.3,740 Z"/></svg>
<div class="t" style="left:367.0px;top:1722.7px;font-size:23.6px;color:#222;font-weight:700;">Rule</div>
<div class="r" style="left:368px;top:1748px;width:1692px;height:283.5px;background:#fff;box-sizing:border-box;border:2px solid #6e6e6e;"></div>
<div class="t" style="left:367.0px;top:2039.2px;font-size:23.6px;color:#222;font-weight:700;">Notes</div>
<div class="r" style="left:368px;top:2069px;width:1351px;height:40px;background:#fff;box-sizing:border-box;border:2px solid #6e6e6e;"></div>
<div class="t" style="left:1732.0px;top:2068.9px;font-size:24.3px;color:#222;font-weight:700;">Performance Analysis</div>
<div class="r" style="left:2106px;top:222px;width:2px;height:15px;background:#c9d3de;"></div>
</body></html>
